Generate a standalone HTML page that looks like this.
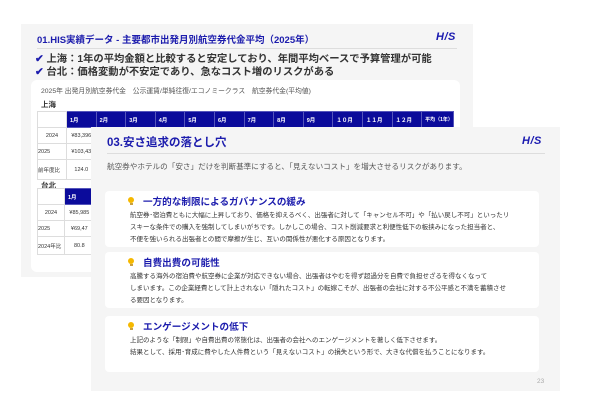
<!DOCTYPE html>
<html><head><meta charset="utf-8"><style>
*{margin:0;padding:0;box-sizing:border-box}
body{width:600px;height:400px;background:#fff;position:relative;overflow:hidden;font-family:"Liberation Sans","Noto Sans CJK JP",sans-serif}
.a{position:absolute;white-space:nowrap}
.s1{left:21px;top:24px;width:452px;height:253px;background:#f5f5f5}
.logo{font-weight:bold;font-style:italic;color:#1a1ab0;font-size:11px;letter-spacing:0.5px}
table{border-collapse:collapse;font-size:5.5px;position:absolute;table-layout:fixed}
td{border:1px solid #ddd;background:#fff;color:#333;text-align:center;height:16px;overflow:hidden;white-space:nowrap}
th{background:#0b0b9b;color:#fff;border:1px solid #5555bb;font-weight:bold;height:16px;text-align:left;padding-left:3px;font-size:5.5px;overflow:hidden;white-space:nowrap}
.s2{left:91px;top:127px;width:469px;height:264px;background:#f5f5f5}
.card{position:absolute;left:14px;width:434px;background:#fff;border-radius:4px}
.h{position:absolute;left:38px;top:3px;font-size:9.6px;font-weight:bold;color:#1c1cad;white-space:nowrap}
.b{position:absolute;left:25px;top:19px;font-size:6.5px;color:#333;line-height:12px;white-space:nowrap}
.bulb{position:absolute;left:23px;top:6px;width:6px;height:6px;border-radius:50%;background:#f5b800}
.bulb:after{content:"";position:absolute;left:1.5px;top:6px;width:3px;height:2px;background:#c9a040}
</style></head><body>
<div class="a s1">
  <div class="a" style="left:16px;top:8px;font-size:9.5px;font-weight:bold;color:#1c1cad">01.HIS実績データ - 主要都市出発月別航空券代金平均（2025年）</div>
  <div class="a logo" style="left:415px;top:7px">H/S</div>
  <div class="a" style="left:16px;top:24px;width:420px;height:1px;background:#ddd"></div>
  <div class="a" style="left:14px;top:30px;font-size:10.3px;font-weight:bold;color:#333;line-height:12.5px"><span style="color:#1c1cad">✔</span> 上海：1年の平均金額と比較すると安定しており、年間平均ベースで予算管理が可能<br><span style="color:#1c1cad">✔</span> 台北：価格変動が不安定であり、急なコスト増のリスクがある</div>
  <div class="a" style="left:10px;top:56px;width:429px;height:192px;background:#fff;border-radius:6px"></div>
  <div class="a" style="left:20px;top:61px;font-size:6.8px;color:#555">2025年 出発月別航空券代金　公示運賃/単純往復/エコノミークラス　航空券代金(平均値)</div>
  <div class="a" style="left:20px;top:75px;font-size:7.5px;font-weight:bold;color:#333">上海</div>
  <table style="left:16px;top:87px;width:416px">
    <colgroup><col style="width:29px"><col span="12" style="width:29.6px"><col style="width:31.8px"></colgroup>
    <tr><td></td><th>1月</th><th>2月</th><th>3月</th><th>4月</th><th>5月</th><th>6月</th><th>7月</th><th>8月</th><th>9月</th><th>１０月</th><th>１１月</th><th>１２月</th><th style="font-size:5px;white-space:normal;line-height:6px">平均（1年）</th></tr>
    <tr><td>2024</td><td>¥83,396</td><td></td><td></td><td></td><td></td><td></td><td></td><td></td><td></td><td></td><td></td><td></td><td></td></tr>
    <tr><td style="text-align:left">2025</td><td>¥103,43</td><td></td><td></td><td></td><td></td><td></td><td></td><td></td><td></td><td></td><td></td><td></td><td></td></tr>
    <tr><td style="height:20px;text-align:left;white-space:normal">前年度比</td><td>124.0</td><td></td><td></td><td></td><td></td><td></td><td></td><td></td><td></td><td></td><td></td><td></td><td></td></tr>
  </table>
  <div class="a" style="left:20px;top:156px;font-size:7.5px;font-weight:bold;color:#333">台北</div>
  <table style="left:16px;top:164px;width:416px">
    <colgroup><col style="width:27px"><col span="12" style="width:29.7px"><col style="width:32.6px"></colgroup>
    <tr><td></td><th>1月</th><th>2月</th><th>3月</th><th>4月</th><th>5月</th><th>6月</th><th>7月</th><th>8月</th><th>9月</th><th>１０月</th><th>１１月</th><th>１２月</th><th>平均</th></tr>
    <tr><td>2024</td><td>¥85,985</td><td></td><td></td><td></td><td></td><td></td><td></td><td></td><td></td><td></td><td></td><td></td><td></td></tr>
    <tr><td style="text-align:left">2025</td><td>¥69,47</td><td></td><td></td><td></td><td></td><td></td><td></td><td></td><td></td><td></td><td></td><td></td><td></td></tr>
    <tr><td style="height:18px;text-align:left;white-space:normal">2024年比</td><td>80.8</td><td></td><td></td><td></td><td></td><td></td><td></td><td></td><td></td><td></td><td></td><td></td><td></td></tr>
  </table>
</div>
<div class="a s2">
  <div class="a" style="left:16px;top:7px;font-size:11.5px;font-weight:bold;color:#1c1cad">03.安さ追求の落とし穴</div>
  <div class="a logo" style="left:431px;top:8px">H/S</div>
  <div class="a" style="left:16px;top:26px;width:438px;height:1px;background:#ddd"></div>
  <div class="a" style="left:16px;top:34px;font-size:7.6px;color:#555">航空券やホテルの「安さ」だけを判断基準にすると、「見えないコスト」を増大させるリスクがあります。</div>
  <div class="card" style="top:64px;height:56px"><div class="bulb"></div><div class="h">一方的な制限によるガバナンスの緩み</div><div class="b">航空券･宿泊費ともに大幅に上昇しており、価格を抑えるべく、出張者に対して「キャンセル不可」や「払い戻し不可」といったリ<br>スキーな条件での購入を強制してしまいがちです。しかしこの場合、コスト削減要求と利便性低下の板挟みになった担当者と、<br>不便を強いられる出張者との間で摩擦が生じ、互いの関係性が悪化する原因となります。</div></div>
  <div class="card" style="top:125px;height:56px"><div class="bulb"></div><div class="h">自費出費の可能性</div><div class="b">高騰する海外の宿泊費や航空券に企業が対応できない場合、出張者はやむを得ず超過分を自費で負担せざるを得なくなって<br>しまいます。この企業経費として計上されない「隠れたコスト」の転嫁こそが、出張者の会社に対する不公平感と不満を蓄積させ<br>る要因となります。</div></div>
  <div class="card" style="top:189px;height:56px"><div class="bulb"></div><div class="h">エンゲージメントの低下</div><div class="b">上記のような「制限」や自費出費の常態化は、出張者の会社へのエンゲージメントを著しく低下させます。<br>結果として、採用･育成に費やした人件費という「見えないコスト」の損失という形で、大きな代償を払うことになります。</div></div>
  <div class="a" style="left:446px;top:251px;font-size:6.5px;color:#aaa">23</div>
</div>
</body></html>
